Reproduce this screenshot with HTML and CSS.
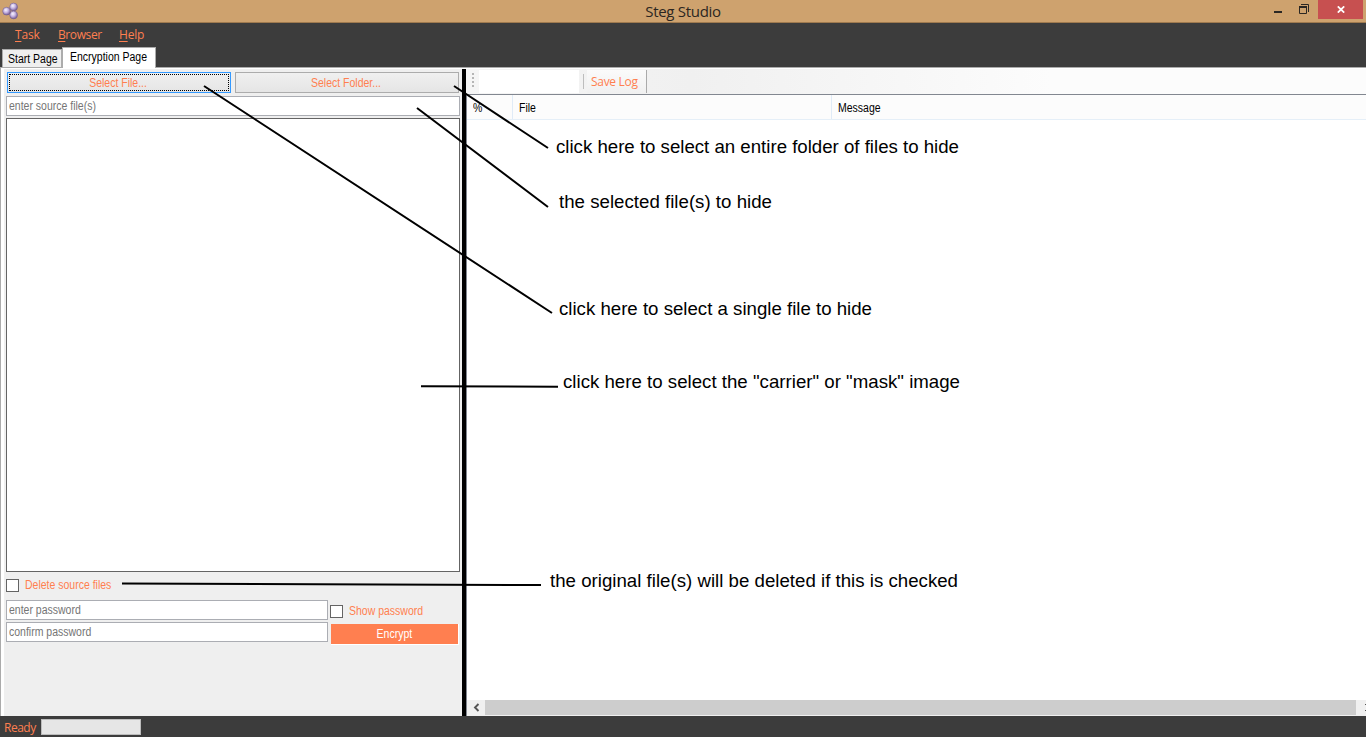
FILE: index.html
```html
<!DOCTYPE html>
<html lang="en">
<head>
<meta charset="utf-8">
<title>Steg Studio</title>
<link rel="stylesheet" href="styles.css">
</head>
<body>
<div class="window">
  <header class="titlebar">
    <svg class="app-icon" width="20" height="20" viewBox="0 0 20 20">
      <defs>
        <radialGradient id="ball" cx=".4" cy=".35" r=".65">
          <stop offset="0" stop-color="#f8f4ff"/>
          <stop offset=".5" stop-color="#c6b4e2"/>
          <stop offset="1" stop-color="#755c96"/>
        </radialGradient>
      </defs>
      <g fill="url(#ball)" stroke="#76628f" stroke-width=".6">
        <circle cx="13.6" cy="7" r="3.900"/>
        <circle cx="13.6" cy="15" r="3.900"/>
        <circle cx="6.6" cy="11.2" r="3.900"/>
      </g>
    </svg>
    <h1 class="title">Steg Studio</h1>
    <div class="controls">
      <svg class="control" width="36" height="19" viewBox="0 0 36 19"><path d="M0 11h8v2H0z" fill="#2b2723"/></svg>
      <svg class="restore" width="10" height="19" viewBox="0 0 10 19"><path d="M2 4.500h7.500V12" fill="none" stroke="#2b2723"/><path d="M.5 6.500h7v7h-7z" fill="none" stroke="#2b2723"/><path d="M0 6h8v2H0z" fill="#2b2723"/></svg>
      <span class="close"><svg width="8" height="7" viewBox="0 0 8 7"><path d="M.8.400 7.200 6.600M7.200.400.8 6.600" stroke="#fff" stroke-width="1.800"/></svg></span>
    </div>
  </header>

  <nav class="menu">
    <span class="menu-task"><u>T</u>ask</span>
    <span class="menu-browser"><u>B</u>rowser</span>
    <span class="menu-help"><u>H</u>elp</span>
  </nav>

  <div class="tabs">
    <div class="tab"><span class="ms">Start Page</span></div>
    <div class="tab active"><span class="ms">Encryption Page</span></div>
  </div>

  <main class="content">
    <section class="form">
      <div class="picker">
        <button class="btn focused"><span class="ms">Select File...</span></button>
        <button class="btn"><span class="ms">Select Folder...</span></button>
      </div>
      <div class="field source"><span class="ms">enter source file(s)</span></div>
      <div class="listbox"></div>
      <div class="check delete"><i class="box"></i><span class="ms">Delete source files</span></div>
      <div class="credentials">
        <div class="passwords">
          <div class="field"><span class="ms">enter password</span></div>
          <div class="field"><span class="ms">confirm password</span></div>
        </div>
        <div class="actions">
          <div class="check"><i class="box"></i><span class="ms">Show password</span></div>
          <button class="encrypt"><span class="ms">Encrypt</span></button>
        </div>
      </div>
    </section>
    <div class="splitter"></div>
    <section class="log">
      <div class="toolbar">
        <span class="grip"><i></i><i></i><i></i><i></i></span>
        <span class="tool-blank"></span>
        <span class="tool-sep"></span>
        <span class="save">Save Log</span>
      </div>
      <div class="table">
        <div class="table-head">
          <div class="col-percent"><span class="ms">%</span></div>
          <div class="col-file"><span class="ms">File</span></div>
          <div class="col-message"><span class="ms">Message</span></div>
        </div>
        <div class="table-body"></div>
        <div class="scrollbar">
          <svg width="19" height="15" viewBox="0 0 19 15"><path d="M11.500 4 8 7.500l3.500 3.500" fill="none" stroke="#555" stroke-width="1.900"/></svg>
          <span class="thumb"></span>
          <svg width="10" height="15" viewBox="0 0 10 15"><path d="M9 4h1v1H9zM9 10h1v1H9z" fill="#555"/></svg>
        </div>
      </div>
    </section>
  </main>

  <footer class="status"><span class="ready">Ready</span><span class="progress"></span></footer>

  <svg class="notes" width="1366" height="737" viewBox="0 0 1366 737">
    <g stroke="#000" stroke-width="2">
      <path d="M454 86 548 148M417 108 548 207M204 86 552 313"/>
      <path d="M421 386.200 558 386.800M122 583.500 541 585"/>
    </g>
    <g class="note-text">
      <text x="556" y="153" textLength="403">click here to select an entire folder of files to hide</text>
      <text x="559" y="208" textLength="213">the selected file(s) to hide</text>
      <text x="559" y="315" textLength="313">click here to select a single file to hide</text>
      <text x="563" y="388" textLength="397">click here to select the "carrier" or "mask" image</text>
      <text x="550" y="587" textLength="408">the original file(s) will be deleted if this is checked</text>
    </g>
  </svg>
</div>
</body>
</html>
```
FILE: styles.css
```css
* { box-sizing: border-box; }
body { margin: 0; overflow: hidden; font: 12px "Liberation Sans", Arial, sans-serif; color: #000; }
button { font: inherit; padding: 0; }
.window { position: relative; width: 1366px; height: 737px; display: flex; flex-direction: column; background: #3c3c3c; }

/* condensed dialog lettering */
.ms { display: inline-block; transform: scaleX(.875); transform-origin: left; white-space: nowrap; line-height: 14px; }

.titlebar { height: 23px; flex: none; display: grid; grid-template-columns: 100px 1fr 100px; background: #cea26e; border-bottom: 1px solid #9f7a4f; }
.title { margin: 0; text-align: center; font: 15px/23px "Open Sans", sans-serif; letter-spacing: -.3px; color: #2b2621; }
.controls { display: flex; justify-content: flex-end; }
.control { margin-right: -11px; }
.restore { margin-right: 9px; }
.close { width: 45px; height: 19px; margin-right: 3px; display: flex; align-items: center; justify-content: center; background: #c75050; flex: none; }

.menu { height: 24px; flex: none; display: flex; padding-left: 15px; font: 12px/24px "Open Sans", sans-serif; color: #ff7f50; }
.menu u { text-underline-offset: 2px; }
.menu-task { width: 43px; letter-spacing: -.2px; }
.menu-browser { width: 61px; letter-spacing: -.5px; }
.menu-help { letter-spacing: -.2px; }
.menu-browser { letter-spacing: -.4px; }

.tabs { height: 21px; flex: none; display: flex; align-items: flex-end; padding-left: 2px; border-bottom: 1px solid #ababab; }
.tab { width: 60px; height: 18px; padding: 2px 0 0 5px; background: #efefef; border: 1px solid #acacac; border-bottom: 0; }
.tab.active { width: 94px; height: 21px; margin-bottom: -1px; padding: 2px 0 0 7px; background: #fff; }

.content { height: 648px; flex: none; display: flex; background: #fff; box-shadow: inset 1px 0 #ababab; }
.form { width: 462px; padding: 4px 2px 0; background: #efefef; background-clip: padding-box; border-left: 4px solid transparent; box-shadow: inset 0 1px #fff; display: flex; flex-direction: column; }
.picker { display: flex; gap: 4px; padding: 0 1px; }
.btn { width: 224px; height: 21px; padding-right: 2px; background: linear-gradient(#f0f0f0, #e5e5e5); border: 1px solid #acacac; color: #ff7f50; }
.btn .ms, .encrypt .ms { transform-origin: center; }
.btn.focused { border-color: #3399ff; outline: 1px dotted #000; outline-offset: -3px; }
.field { height: 20px; background: #fff; border: 1px solid #abadb3; color: #757575; padding: 2px 0 0 2px; }
.source { margin-top: 3px; }
.listbox { height: 454px; margin-top: 2px; background: #fff; border: 1px solid #646464; }
.check { display: flex; align-items: center; gap: 6px; height: 13px; color: #ff7f50; }
.check .ms { margin-top: -2px; }
.box { width: 13px; height: 13px; background: #fff; border: 1px solid #646464; }
.delete { margin-top: 7px; }
.credentials { display: flex; gap: 2px; margin-top: 8px; }
.passwords { width: 322px; display: grid; gap: 2px; align-content: start; }
.actions { padding-top: 5px; }
.encrypt { display: block; width: 128px; height: 21px; margin: 6px 0 0 1px; padding-right: 1px; background: #ff7f50; color: #fff; border: 0 solid #fff; border-width: 0 1px 1px 0; }

.splitter { width: 4px; margin-top: 1px; background: #000; }
.log { flex: 1; display: flex; flex-direction: column; min-width: 0; }
.toolbar { height: 26px; flex: none; display: flex; align-items: flex-start; background: linear-gradient(90deg, #f5f5f5, #f0f0f0 25%, #fcfcfc 65%); border-top: 1px solid #fff; padding-top: 1px; }
.grip { width: 13px; padding: 3px 0 0 6px; display: grid; gap: 2px; }
.grip i { width: 2px; height: 2px; background: #b5b5b5; }
.tool-blank { width: 100px; height: 23px; background: #fff; }
.tool-sep { width: 1px; height: 15px; margin: 4px 3px 0 4px; background: #bdbdbd; }
.save { width: 60px; height: 23px; padding-left: 4px; border-right: 1px solid #aaa; background: linear-gradient(#fbfbfb, #f0f0f0); font: 12px/24px "Open Sans", sans-serif; letter-spacing: -.3px; color: #ff7f50; white-space: nowrap; }
.table { flex: 1; display: flex; flex-direction: column; border: solid #828790; border-width: 1px 0 0 1px; }
.table-head { height: 25px; flex: none; display: flex; background: #fcfcfc; border-bottom: 1px solid #e5eff8; }
.table-head > div { padding: 6px 0 0 6px; }
.col-percent { width: 46px; border-right: 1px solid #e0ebf7; }
.col-file { width: 319px; border-right: 1px solid #e0ebf7; }
.table-body { flex: 1; }
.scrollbar { height: 16px; display: flex; background: #f0f0f0; }
.thumb { flex: 1; height: 15px; margin-left: -1px; background: #cdcdcd; }

.status { height: 21px; display: flex; padding: 3px 0 0 4px; background: #3c3c3c; }
.ready { width: 37px; font: 12px/18px "Open Sans", sans-serif; letter-spacing: -.5px; color: #ff7f50; }
.progress { width: 100px; height: 16px; background: #e6e6e6; border: 1px solid #bcbcbc; }

/* annotations drawn over the window */
.notes { position: absolute; left: 0; top: 0; pointer-events: none; }
.note-text { font: 18.67px "Liberation Sans", Arial, sans-serif; fill: #000; }
```
